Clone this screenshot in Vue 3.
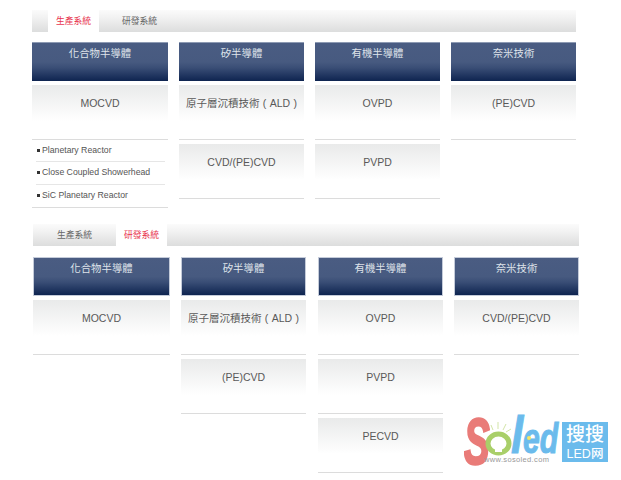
<script setup>
const ald = '原子層沉積技術 ( ALD )'
const panels = [
  {
    cls: 'panel-a',
    active: 1,
    cols: [
      { title: '化合物半導體', items: ['MOCVD'], sub: ['Planetary Reactor', 'Close Coupled Showerhead', 'SiC Planetary Reactor'] },
      { title: '矽半導體', items: [ald, 'CVD/(PE)CVD'] },
      { title: '有機半導體', items: ['OVPD', 'PVPD'] },
      { title: '奈米技術', items: ['(PE)CVD'] }
    ]
  },
  {
    cls: 'panel-b',
    active: 2,
    cols: [
      { title: '化合物半導體', items: ['MOCVD'] },
      { title: '矽半導體', items: [ald, '(PE)CVD'] },
      { title: '有機半導體', items: ['OVPD', 'PVPD', 'PECVD'] },
      { title: '奈米技術', items: ['CVD/(PE)CVD'] }
    ]
  }
]
</script>

<template>
  <div class="page">
    <section v-for="p in panels" :key="p.cls" class="panel" :class="p.cls">
      <div class="tabs">
        <span class="tab" :class="{ on: p.active === 1 }">生產系統</span>
        <span class="tab" :class="{ on: p.active === 2 }">研發系統</span>
      </div>
      <div class="cols">
        <div v-for="c in p.cols" :key="c.title" class="col">
          <h3 class="head">{{ c.title }}</h3>
          <div v-for="i in c.items" :key="i" class="item">{{ i }}</div>
          <ul v-if="c.sub" class="sub">
            <li v-for="s in c.sub" :key="s">{{ s }}</li>
          </ul>
        </div>
      </div>
    </section>

    <svg class="logo" width="148" height="56" viewBox="0 0 148 56" aria-label="Soled">
      <text transform="translate(0 50) scale(.6 1)" class="l-s">S</text>
      <path d="M27 11 L29 16 M34 8 L34 15 M42 10 L39 16 M47 15 L42 18" stroke="#d3e5a8" stroke-width="1" fill="none" />
      <ellipse cx="34.5" cy="29.5" rx="10.5" ry="9.5" fill="none" stroke="#a9cf69" stroke-width="5" />
      <path d="M31 30 L34.5 25 L38 30 L38 38 L31 38 Z" fill="#fff" />
      <text transform="translate(47 39) scale(.85 1)" class="l-l">l</text>
      <text transform="translate(59 39) scale(.72 1)" class="l-ed">ed</text>
      <circle cx="65" cy="24" r="2" fill="#f5e663" />
      <text x="20" y="48" class="l-url">www.sosoled.com</text>
      <rect x="98" y="8" width="46" height="40" fill="#6bbbec" />
      <text x="121" y="27" class="l-cn" text-anchor="middle">搜搜</text>
      <text x="121" y="44" class="l-sub" text-anchor="middle">LED网</text>
    </svg>
  </div>
</template>

<style scoped>
.page {
  position: relative;
  width: 621px;
  height: 480px;
  overflow: hidden;
  background: #fff;
  font-family: "Liberation Sans", "Noto Sans CJK TC", sans-serif;
}
.panel-a {
  margin-left: 32px;
  padding-top: 10px;
  height: 214px;
}
.panel-b {
  margin-left: 33px;
}
.tabs {
  display: flex;
  height: 22px;
  background: linear-gradient(#fbfbfb, #f3f3f3 30%, #dcdddd);
}
.panel-a .tabs { width: 544px; box-sizing: border-box; padding-left: 16px; }
.panel-b .tabs { width: 546px; }
.tab {
  line-height: 23px;
  text-align: center;
  font-size: 8.8px;
  color: #666;
  white-space: nowrap;
}
.panel-a .tab { width: 51px; margin-right: 15px; }
.panel-b .tab { width: 51px; }
.panel-b .tab:first-child { width: 83px; }
.tab.on {
  background: #fff;
  color: #e8354f;
}
.cols {
  display: flex;
  gap: 11px;
  margin-top: 10px;
}
.panel-b .cols { margin-top: 11px; }
.col { width: 125px; }
.col:first-child { width: 136px; }
.panel-b .col:first-child { width: 137px; }
.panel-b .col:nth-child(3) { margin-left: 1px; }
.head {
  margin: 0 0 4px;
  height: 39px;
  box-sizing: border-box;
  padding-top: 3px;
  font-weight: 400;
  font-size: 10.4px;
  line-height: 15px;
  text-align: center;
  color: #dfe3ea;
  background: linear-gradient(#4a5c82, #475a80 50%, #3a4e76 65%, #0e2450);
  border-top: 1px solid #8d9ab3;
}
.panel-b .head {
  border: 1px solid #c4cbd9;
}
.item {
  margin-bottom: 4px;
  padding-top: 11px;
  height: 43px;
  line-height: 15px;
  border-bottom: 1px solid #dcdcdc;
  text-align: center;
  font-size: 10.5px;
  word-spacing: .5px;
  color: #595959;
  background: linear-gradient(#e9eaea, #fff 36px);
  white-space: nowrap;
}
.item:has(+ .sub) { margin-bottom: 0; }
.sub {
  list-style: none;
  margin: 0;
  padding: 0 3px 0 4px;
  border-bottom: 1px solid #dcdcdc;
}
.sub li {
  position: relative;
  height: 22.33px;
  line-height: 21px;
  padding-left: 6px;
  font-size: 8.7px;
  color: #555;
  border-bottom: 1px solid #e6e6e6;
  box-sizing: border-box;
  white-space: nowrap;
}
.sub li:last-child { border-bottom: 0; }
.sub li::before {
  content: "";
  position: absolute;
  left: 1px;
  top: 9px;
  width: 3px;
  height: 3px;
  background: #333;
}
.logo {
  position: absolute;
  left: 464px;
  top: 414px;
}
.l-s {
  font: italic 700 64px "Liberation Sans", sans-serif;
  fill: #e97b78;
  stroke: #e97b78;
  stroke-width: 2.5px;
}
.l-l {
  font: italic 700 52px "Liberation Sans", sans-serif;
  fill: #6bbbec;
  stroke: #6bbbec;
  stroke-width: 1px;
}
.l-ed {
  font: italic 700 42px "Liberation Sans", sans-serif;
  fill: #6bbbec;
  stroke: #6bbbec;
  stroke-width: 1px;
}
.l-url {
  font: 7.5px "Liberation Sans", sans-serif;
  letter-spacing: .35px;
  fill: #999;
}
.l-cn {
  font: 500 19px "Noto Sans CJK SC", sans-serif;
  fill: #fff;
}
.l-sub {
  font: 500 12.5px "Liberation Sans", "Noto Sans CJK SC", sans-serif;
  fill: #fff;
}
</style>
